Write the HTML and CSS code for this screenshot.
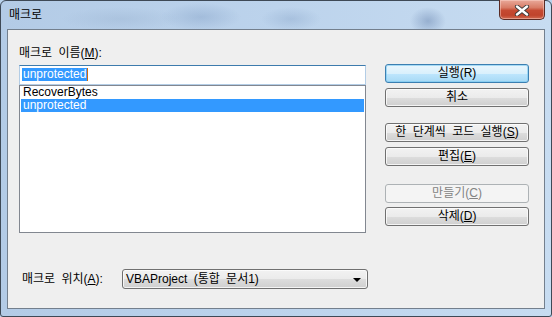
FILE: index.html
```html
<!DOCTYPE html>
<html lang="ko">
<head>
<meta charset="utf-8">
<title>매크로</title>
<link rel="stylesheet" href="styles.css">
</head>
<body>
<div class="window">
  <div class="titlebar">
    <div class="title">매크로</div>
    <div class="close">
      <svg width="16" height="11" viewBox="0 0 16 11">
        <path d="M3 1.5 L13 9.5 M13 1.5 L3 9.5" stroke="#3a3a3a" stroke-width="4.2" stroke-linecap="round" fill="none"/>
        <path d="M3 1.5 L13 9.5 M13 1.5 L3 9.5" stroke="#ffffff" stroke-width="2.4" stroke-linecap="round" fill="none"/>
      </svg>
    </div>
  </div>
  <div class="client">
    <div class="top">
      <div class="left">
        <div class="label">매크로 이름(<u>M</u>):</div>
        <div class="input"><span class="sel">unprotected</span><span class="caret"></span></div>
        <div class="list">
          <div class="item">RecoverBytes</div>
          <div class="item selected">unprotected</div>
        </div>
      </div>
      <div class="right">
        <div class="btn default b1">실행(R)</div>
        <div class="btn b2">취소</div>
        <div class="btn b3">한 단계씩 코드 실행(<u>S</u>)</div>
        <div class="btn b4">편집(<u>E</u>)</div>
        <div class="btn disabled b5">만들기(<u>C</u>)</div>
        <div class="btn b6">삭제(<u>D</u>)</div>
      </div>
    </div>
    <div class="bottom">
      <div class="blabel">매크로 위치(<u>A</u>):</div>
      <div class="combo">
        <span class="combo-text">VBAProject (통합 문서1)</span>
        <span class="arrow"></span>
      </div>
    </div>
  </div>
</div>
</body>
</html>
```
FILE: styles.css
```css
* { box-sizing: border-box; }
html, body { margin: 0; padding: 0; }
body {
  width: 552px;
  height: 317px;
  overflow: hidden;
  font-family: "Liberation Sans", "Noto Sans CJK KR", sans-serif;
  font-size: 12px;
  word-spacing: 3px;
  color: #000;
  background: #b9d2ec;
}
u { text-decoration: underline; text-underline-offset: 1px; }
.window {
  width: 552px;
  height: 317px;
  border: 1px solid #3e4956;
  border-radius: 6px 6px 3px 3px;
  padding: 0 6px 7px 6px;
  display: flex;
  flex-direction: column;
  background:
    radial-gradient(ellipse 40px 14px at 200px 16px, rgba(120,150,190,0.35), transparent),
    radial-gradient(ellipse 30px 12px at 290px 18px, rgba(120,150,190,0.3), transparent),
    radial-gradient(ellipse 18px 14px at 427px 20px, rgba(70,100,150,0.35), transparent),
    radial-gradient(ellipse 60px 12px at 120px 18px, rgba(150,175,205,0.35), transparent),
    linear-gradient(to right, #b3cbe6 0%, #bcd3ec 50%, #c7dcf1 100%);
}
.titlebar {
  height: 28px;
  display: flex;
  justify-content: space-between;
  align-items: flex-start;
}
.title {
  margin-top: 7px;
  margin-left: 2px;
  line-height: 14px;
  font-size: 12px;
  color: #000;
}
.close {
  width: 46px;
  height: 20px;
  margin-top: -1px;
  border: 1px solid #5a2b24;
  border-top: none;
  border-radius: 0 0 5px 5px;
  background: linear-gradient(to bottom, #e9a99a 0%, #d87c66 40%, #c54a32 55%, #c0442c 80%, #d06a50 100%);
  box-shadow: inset 0 0 0 1px rgba(255,220,210,0.45);
  display: flex;
  align-items: center;
  justify-content: center;
}
.close svg { display: block; margin-top: 1px; }
.client {
  height: 280px;
  border: 1px solid #737f8d;
  background: #efefef;
  padding: 16px 15px 0 11px;
  display: flex;
  flex-direction: column;
}
.top {
  display: flex;
  gap: 19px;
}
.left {
  width: 347px;
  display: flex;
  flex-direction: column;
}
.label {
  line-height: 14px;
  height: 14px;
  margin-bottom: 5px;
}
.input {
  height: 20px;
  background: #fff;
  border: 1px solid #b3cde6;
  border-top-color: #3d7bad;
  padding: 2px 0 0 2px;
  display: flex;
  align-items: flex-start;
}
.sel {
  background: #3399ff;
  color: #fff;
  line-height: 13px;
  height: 13px;
  padding: 0 1px;
}
.caret {
  width: 1px;
  height: 13px;
  background: #cc6a10;
}
.list {
  height: 148px;
  background: #fff;
  border: 1px solid #828790;
  padding: 0 1px;
}
.item {
  height: 13px;
  line-height: 13px;
  padding-left: 2px;
}
.item.selected {
  background: #3399ff;
  color: #fff;
}
.right {
  width: 144px;
  padding-top: 18px;
  display: flex;
  flex-direction: column;
}
.btn {
  height: 19px;
  border: 1px solid #707070;
  border-radius: 3px;
  background: linear-gradient(to bottom, #f2f2f2 0%, #ebebeb 50%, #dddddd 51%, #cfcfcf 100%);
  box-shadow: inset 0 0 0 1px rgba(252,252,252,0.8);
  text-align: center;
  line-height: 17px;
  font-size: 12px;
}
.btn.default {
  border-color: #3c7fb1;
  background: linear-gradient(to bottom, #eaf6fd 0%, #d9f0fc 50%, #bee6fd 51%, #a7d9f5 100%);
  box-shadow: inset 0 0 0 1px rgba(120,200,240,0.6);
}
.btn.disabled {
  border-color: #adb2b5;
  background: #f4f4f4;
  box-shadow: none;
  color: #838383;
}
.b2 { margin-top: 5px; }
.b3 { margin-top: 16px; }
.b4 { margin-top: 5px; }
.b5 { margin-top: 18px; }
.b6 { margin-top: 4px; }
.bottom {
  margin-top: 36px;
  display: flex;
  align-items: center;
}
.blabel {
  width: 103px;
  padding-left: 3px;
  line-height: 14px;
}
.combo {
  width: 246px;
  height: 20px;
  border: 1px solid #707070;
  border-radius: 3px;
  background: linear-gradient(to bottom, #f2f2f2 0%, #ebebeb 50%, #dddddd 51%, #cfcfcf 100%);
  box-shadow: inset 0 0 0 1px rgba(252,252,252,0.8);
  display: flex;
  align-items: center;
  justify-content: space-between;
  padding: 0 6px 0 3px;
}
.combo-text { line-height: 16px; }
.arrow {
  width: 0;
  height: 0;
  border-left: 4px solid transparent;
  border-right: 4px solid transparent;
  border-top: 4px solid #000;
  margin-top: 1px;
}
```
